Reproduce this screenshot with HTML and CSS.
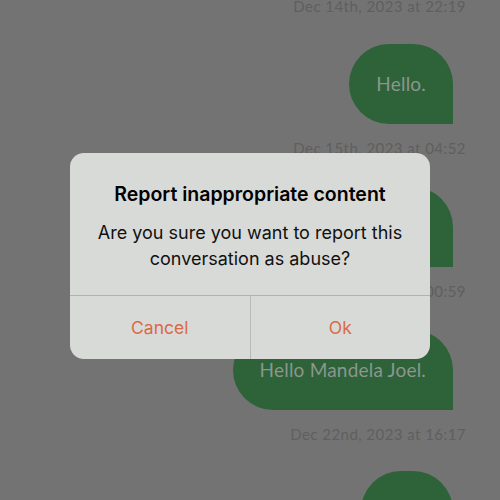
FILE: index.html
```html
<!DOCTYPE html>
<html>
<head>
<meta charset="utf-8">
<link rel="stylesheet" href="styles.css">
</head>
<body>
<div class="chat">
  <div class="stamp">Dec 14th, 2023 at 22:19</div>
  <div class="bubble">Hello.</div>
  <div class="stamp">Dec 15th, 2023 at 04:52</div>
  <div class="bubble">Hello.</div>
  <div class="stamp">Dec 16th, 2023 at 00:59</div>
  <div class="bubble">Hello Mandela Joel.</div>
  <div class="stamp stamp-last">Dec 22nd, 2023 at 16:17</div>
  <div class="bubble">Hey.</div>
</div>
<div class="dialog">
  <div class="dialog-body">
    <div class="dialog-title">Report inappropriate content</div>
    <div class="dialog-msg">Are you sure you want to report this conversation as abuse?</div>
  </div>
  <div class="dialog-actions">
    <div class="dialog-btn">Cancel</div>
    <div class="dialog-btn">Ok</div>
  </div>
</div>
</body>
</html>
```
FILE: styles.css
```css
html, body {
  margin: 0;
  padding: 0;
  width: 500px;
  height: 500px;
  overflow: hidden;
  background: #737373;
}
.chat {
  display: flex;
  flex-direction: column;
  align-items: flex-end;
  margin-top: -4px;
  font-family: Lato, "Open Sans", sans-serif;
}
.stamp {
  font-size: 15px;
  line-height: 20px;
  color: #5f5f5f;
  margin-right: 34px;
  margin-top: 14px;
  margin-bottom: 29px;
  letter-spacing: 0.45px;
}
.stamp:first-child { margin-top: 0; margin-bottom: 28px; }
.stamp-last { margin-bottom: 27px; }
.bubble {
  background: #2e6239;
  color: #8b978d;
  font-size: 19px;
  line-height: 20px;
  padding: 30px 27px;
  margin-right: 47px;
  border-radius: 40px 40px 0 40px;
  letter-spacing: 0.2px;
}
.dialog {
  position: absolute;
  left: 70px;
  top: 153px;
  width: 360px;
  height: 206px;
  border-radius: 14px;
  background: #d8dad8;
  display: flex;
  flex-direction: column;
  font-family: Inter, "Noto Sans", sans-serif;
  overflow: hidden;
}
.dialog-body {
  padding: 29px 12px 23px;
  text-align: center;
  border-bottom: 1px solid #b0b2b0;
}
.dialog-title {
  font-size: 19.5px;
  font-weight: 600;
  line-height: 24px;
  color: #000;
  margin-bottom: 14px;
}
.dialog-msg {
  font-size: 18px;
  line-height: 26px;
  color: #111;
}
.dialog-actions {
  flex: 1;
  display: flex;
}
.dialog-btn {
  flex: 1;
  display: flex;
  align-items: center;
  justify-content: center;
  font-size: 17.5px;
  color: #d96a45;
}
.dialog-btn + .dialog-btn {
  border-left: 1px solid #b8bab8;
}
```
